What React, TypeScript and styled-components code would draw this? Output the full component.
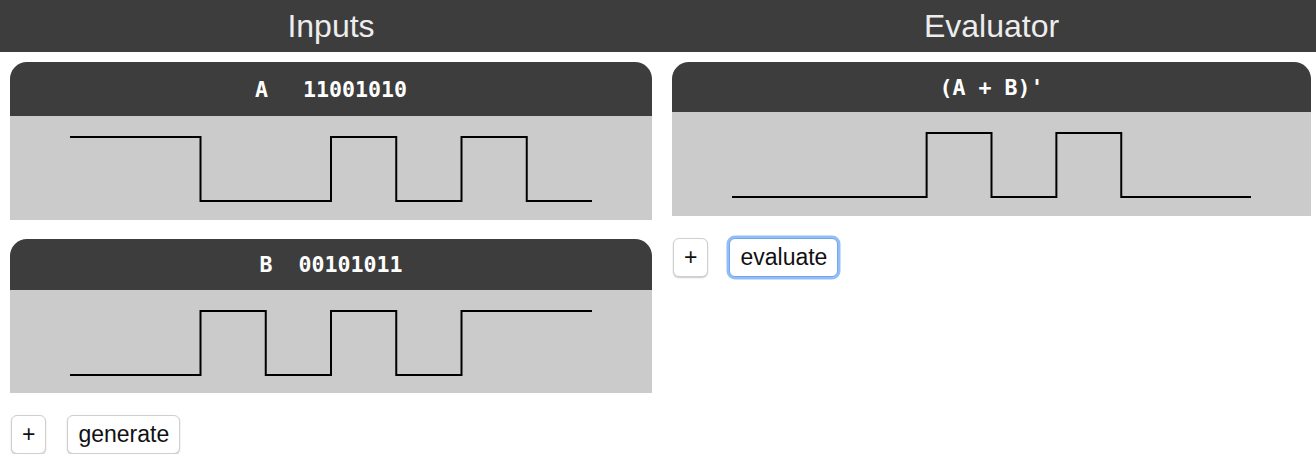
import React from "react";
import styled, { createGlobalStyle } from "styled-components";

const Global = createGlobalStyle`
  html, body { margin: 0; padding: 0; background: #ffffff; }
  body { font-family: "Liberation Sans", Arial, sans-serif; }
`;

const DARK = "#3d3d3d";
const GRAY = "#cbcbcb";

const TitleBar = styled.header`
  display: grid;
  grid-template-columns: 642px 639px;
  column-gap: 20px;
  padding: 0 10px;
  height: 52px;
  background: ${DARK};
  align-items: center;
`;

const Title = styled.h1`
  margin: 0;
  text-align: center;
  color: #ededed;
  font-family: "Liberation Sans", Arial, sans-serif;
  font-weight: 400;
  font-size: 32px;
  line-height: 52px;
`;

const Content = styled.main`
  display: grid;
  grid-template-columns: 642px 639px;
  column-gap: 20px;
  padding: 10px 10px 0;
  align-items: start;
`;

const Column = styled.section`
  display: flex;
  flex-direction: column;
  gap: 19px;
`;

const Card = styled.div`
  display: flex;
  flex-direction: column;
  border-radius: 17px 17px 0 0;
  overflow: hidden;
`;

const CardHead = styled.div<{ $h: number }>`
  height: ${(p) => p.$h}px;
  background: ${DARK};
  color: #ffffff;
  display: flex;
  align-items: center;
  justify-content: center;
  font-family: "DejaVu Sans Mono", "Liberation Mono", monospace;
  font-weight: 700;
  font-size: 21.6px;
  white-space: pre;
`;

const Gap = styled.span<{ $w: number }>`
  display: inline-block;
  width: ${(p) => p.$w}px;
`;

const CardBody = styled.div<{ $h: number }>`
  height: ${(p) => p.$h}px;
  background: ${GRAY};
  padding: 20px 60px 0;
  box-sizing: border-box;
`;

const Wave = styled.svg`
  display: block;
  width: 100%;
  height: 66px;
`;

const ButtonRow = styled.div`
  display: flex;
  gap: 21px;
  padding-left: 1px;
  margin-top: 3px;
`;

const Button = styled.button<{ $focus?: boolean }>`
  height: 39px;
  padding: 0 10px;
  background: #ffffff;
  color: #111;
  font-family: "Liberation Sans", Arial, sans-serif;
  font-size: 23px;
  border: 1px solid ${(p) => (p.$focus ? "#6fa8ee" : "#cfcfcf")};
  border-radius: 6px;
  box-shadow: ${(p) =>
    p.$focus
      ? "0 0 0 2.5px rgba(135, 182, 245, 0.9)"
      : "0 1px 1.5px rgba(0,0,0,0.22)"};
  cursor: pointer;
`;

function Waveform({ bits }: { bits: string }) {
  const n = bits.length;
  const pts: string[] = [];
  for (let i = 0; i < n; i++) {
    const y = bits[i] === "1" ? 1 : 65;
    pts.push(`${i},${y}`, `${i + 1},${y}`);
  }
  return (
    <Wave viewBox={`0 0 ${n} 66`} preserveAspectRatio="none">
      <polyline
        points={pts.join(" ")}
        fill="none"
        stroke="#000"
        strokeWidth={2}
        vectorEffect="non-scaling-stroke"
      />
    </Wave>
  );
}

const A = "11001010";
const B = "00101011";
const NOR = A.split("")
  .map((c, i) => (c === "1" || B[i] === "1" ? "0" : "1"))
  .join("");

export default function App() {
  return (
    <>
      <Global />
      <TitleBar>
        <Title>Inputs</Title>
        <Title>Evaluator</Title>
      </TitleBar>
      <Content>
        <Column>
          <Card>
            <CardHead $h={54}>
              A<Gap $w={35} />
              {A}
            </CardHead>
            <CardBody $h={104}>
              <Waveform bits={A} />
            </CardBody>
          </Card>
          <Card>
            <CardHead $h={51}>
              B<Gap $w={26} />
              {B}
            </CardHead>
            <CardBody $h={103}>
              <Waveform bits={B} />
            </CardBody>
          </Card>
          <ButtonRow>
            <Button>+</Button>
            <Button>generate</Button>
          </ButtonRow>
        </Column>
        <Column>
          <Card>
            <CardHead $h={50}>{`(A + B)'`}</CardHead>
            <CardBody $h={104}>
              <Waveform bits={NOR} />
            </CardBody>
          </Card>
          <ButtonRow>
            <Button>+</Button>
            <Button $focus>evaluate</Button>
          </ButtonRow>
        </Column>
      </Content>
    </>
  );
}
